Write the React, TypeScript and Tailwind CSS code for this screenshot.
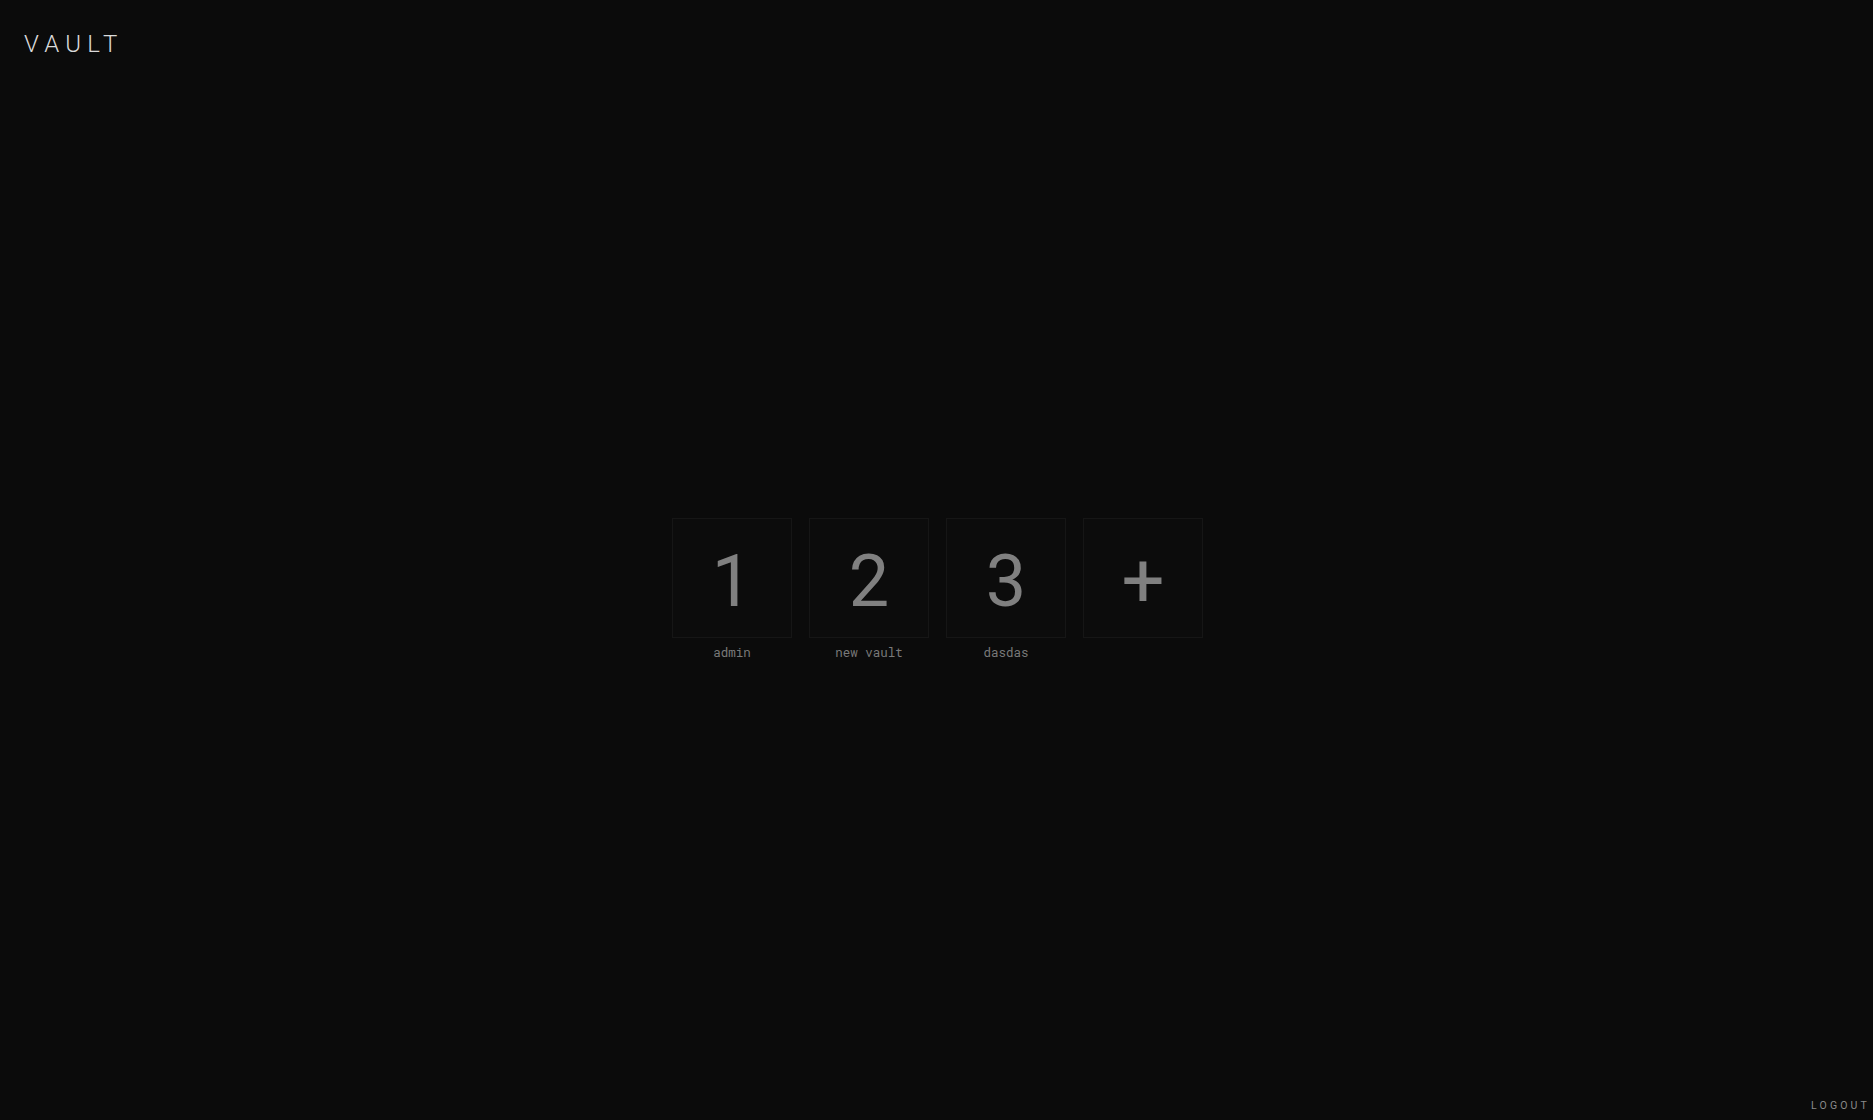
import React from "react";

const vaults = [
  { n: "1", name: "admin" },
  { n: "2", name: "new vault" },
  { n: "3", name: "dasdas" },
];

export default function App() {
  return (
    <div className="relative flex h-[1120px] w-full flex-col bg-[#0b0b0b] font-['Roboto',sans-serif]">
      <header className="px-6 pt-[32px]">
        <span className="text-[24px] font-light tracking-[0.26em] text-[#dadada] leading-[24px]">VAULT</span>
      </header>
      <main className="flex flex-1 items-start justify-center pl-[2px] pt-[459px]">
        <div className="flex gap-[17px]">
          {vaults.map((v) => (
            <div key={v.n} className="flex w-[120px] flex-col items-center">
              <div className="flex h-[120px] w-[120px] items-center justify-center border border-[#161616] bg-[#0c0c0c] text-[72px] font-normal leading-none text-[#808080]">
                <span className="translate-y-[4px]">{v.n}</span>
              </div>
              <div className="mt-[4px] font-['Roboto_Mono','DejaVu_Sans_Mono',monospace] text-[12.5px] leading-[20px] text-[#7a7a7a]">
                {v.name}
              </div>
            </div>
          ))}
          <div className="flex w-[120px] flex-col items-center">
            <div className="flex h-[120px] w-[120px] items-center justify-center border border-[#161616] bg-[#0c0c0c] text-[76px] font-normal leading-none text-[#808080]">
              <span className="translate-y-[3px]">+</span>
            </div>
          </div>
        </div>
      </main>
      <div className="absolute bottom-[9px] right-[3px] text-[10.5px] tracking-[0.3em] text-[#8a8a8a] leading-none">
        LOGOUT
      </div>
    </div>
  );
}
